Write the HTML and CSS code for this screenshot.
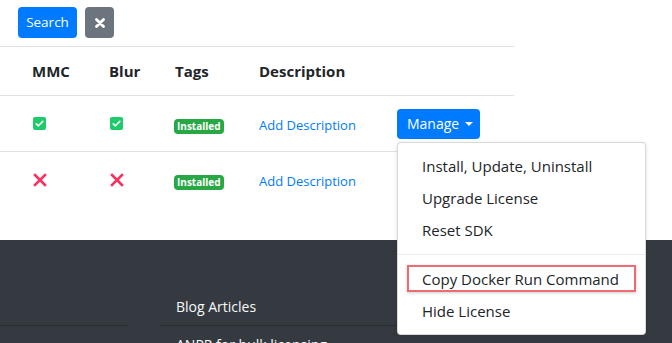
FILE: index.html
```html
<!DOCTYPE html>
<html lang="en">
<head>
  <meta charset="UTF-8" />
  <title>Licenses</title>
  <link rel="stylesheet" href="styles.css">
</head>
<body>

<div class="toolbar">
  <button class="btn btn-primary btn-search">Search</button>
  <button class="btn btn-secondary btn-clear" title="Clear">
    <svg width="10" height="10" viewBox="0 0 10 10"><path d="M1.5 1.5 L8.5 8.5 M8.5 1.5 L1.5 8.5" stroke="#fff" stroke-width="2.8" stroke-linecap="round"/></svg>
  </button>
</div>

<table class="licenses">
  <thead>
    <tr>
      <th class="col-mmc">MMC</th>
      <th class="col-blur">Blur</th>
      <th class="col-tags">Tags</th>
      <th class="col-desc">Description</th>
      <th class="col-actions"></th>
    </tr>
  </thead>
  <tbody>
    <tr>
      <td class="col-mmc"><span class="icon-yes"><svg width="13" height="13" viewBox="0 0 13 13"><rect width="13" height="13" rx="2" fill="#1ecb6a"/><path d="M3.3 6.8 L5.4 8.8 L9.8 4.4" fill="none" stroke="#fff" stroke-width="1.6" stroke-linecap="round" stroke-linejoin="round"/></svg></span></td>
      <td class="col-blur"><span class="icon-yes"><svg width="13" height="13" viewBox="0 0 13 13"><rect width="13" height="13" rx="2" fill="#1ecb6a"/><path d="M3.3 6.8 L5.4 8.8 L9.8 4.4" fill="none" stroke="#fff" stroke-width="1.6" stroke-linecap="round" stroke-linejoin="round"/></svg></span></td>
      <td><span class="badge">Installed</span></td>
      <td><a href="#" class="link">Add Description</a></td>
      <td>
        <div class="dropdown">
          <button class="btn btn-primary btn-manage">Manage <span class="caret"></span></button>
          <div class="dropdown-menu">
            <a href="#" class="dropdown-item">Install, Update, Uninstall</a>
            <a href="#" class="dropdown-item">Upgrade License</a>
            <a href="#" class="dropdown-item">Reset SDK</a>
            <div class="dropdown-divider"></div>
            <a href="#" class="dropdown-item highlighted">Copy Docker Run Command</a>
            <a href="#" class="dropdown-item">Hide License</a>
          </div>
        </div>
      </td>
    </tr>
    <tr>
      <td class="col-mmc"><span class="icon-no"><svg width="14" height="14" viewBox="0 0 14 14"><path d="M2 2 L12 12 M12 2 L2 12" stroke="#f7325c" stroke-width="2.6" stroke-linecap="square"/></svg></span></td>
      <td class="col-blur"><span class="icon-no"><svg width="14" height="14" viewBox="0 0 14 14"><path d="M2 2 L12 12 M12 2 L2 12" stroke="#f7325c" stroke-width="2.6" stroke-linecap="square"/></svg></span></td>
      <td><span class="badge">Installed</span></td>
      <td><a href="#" class="link">Add Description</a></td>
      <td></td>
    </tr>
  </tbody>
</table>

<footer>
  <ul class="footer-list footer-left">
    <li>&nbsp;</li>
  </ul>
  <ul class="footer-list footer-right">
    <li>Blog Articles</li>
    <li>ANPR for bulk licensing</li>
  </ul>
</footer>

</body>
</html>
```

FILE: styles.css
```css
* { box-sizing: border-box; margin: 0; padding: 0; }
body {
  font-family: 'Open Sans', 'Noto Sans', sans-serif;
  background: #fff;
  color: #212529;
  width: 672px;
  height: 343px;
  overflow: hidden;
}
.toolbar {
  display: flex;
  gap: 8px;
  padding: 7px 0 0 18px;
  height: 46px;
}
.btn {
  border: none;
  border-radius: 4px;
  color: #fff;
  font-family: inherit;
  font-size: 14px;
  line-height: 21px;
  padding: 5px 9px;
  height: 31px;
  cursor: pointer;
}
.btn-primary { background: #007bff; }
.btn-secondary { background: #6c757d; }
.btn-search {
  width: 59px;
  padding: 5px 0;
  font-size: 13.5px;
}
.btn-clear {
  width: 29px;
  display: flex;
  align-items: center;
  justify-content: center;
  padding: 0;
}
.licenses {
  border-collapse: collapse;
  width: 514px;
  table-layout: fixed;
}
.licenses th, .licenses td {
  text-align: left;
  padding: 0 12px;
  border-top: 1px solid #dee2e6;
  vertical-align: middle;
}
.licenses th {
  height: 49px;
  font-size: 15px;
  font-weight: 700;
  border-bottom: 1px solid #dee2e6;
}
.licenses td {
  height: 56px;
}
.licenses tbody tr:first-child td { border-top: none; }
.col-mmc { width: 97px; padding-left: 32px !important; }
.col-blur { width: 66px; }
.col-tags { width: 84px; }
.col-desc { width: 138px; }
.col-actions { width: 129px; }
.icon-yes, .icon-no {
  display: flex;
  padding-left: 1px;
}
.badge {
  display: inline-block;
  background: #28a745;
  color: #fff;
  font-size: 10px;
  font-weight: 700;
  line-height: 15px;
  padding: 0 3px;
  border-radius: 4px;
  margin-left: -1px;
}
.link {
  color: #007bff;
  text-decoration: none;
  font-size: 13px;
}
.dropdown {
  position: relative;
}
.btn-manage {
  font-size: 14px;
  height: 30px;
  width: 83px;
  padding: 3px 0 3px 10px;
  display: inline-flex;
  align-items: center;
  gap: 6px;
}
.caret {
  width: 0;
  height: 0;
  border-left: 4px solid transparent;
  border-right: 4px solid transparent;
  border-top: 4px solid #fff;
  margin-top: 1px;
}
.dropdown-menu {
  position: absolute;
  top: 33px;
  left: 0;
  width: 249px;
  background: #fff;
  border: 1px solid rgba(0,0,0,0.15);
  border-radius: 4px;
  padding: 7px 0;
  box-shadow: 0 1px 4px rgba(0,0,0,0.12);
  z-index: 10;
}
.dropdown-item {
  display: block;
  position: relative;
  padding: 4px 24px;
  line-height: 24px;
  font-size: 15px;
  color: #212529;
  text-decoration: none;
  white-space: nowrap;
}
.dropdown-divider {
  height: 0;
  margin: 8px 0;
  border-top: 1px solid #e9ecef;
}
/* red annotation box */
.highlighted::after {
  content: "";
  position: absolute;
  left: 9px;
  right: 9px;
  top: 2px;
  bottom: 3px;
  border: 2px solid #ee6b72;
  box-shadow: 0 1px 3px rgba(0,0,0,0.2);
}
footer {
  background: #343a40;
  margin-top: 32px;
  height: 200px;
  padding-top: 48px;
  display: flex;
  gap: 32px;
}
.footer-list {
  list-style: none;
}
.footer-left { width: 128px; }
.footer-right { width: 450px; }
.footer-list li {
  color: #f8f9fa;
  font-size: 14px;
  line-height: 21px;
  padding: 8px 16px;
  border-bottom: 1px solid #2a2e33;
}
```
